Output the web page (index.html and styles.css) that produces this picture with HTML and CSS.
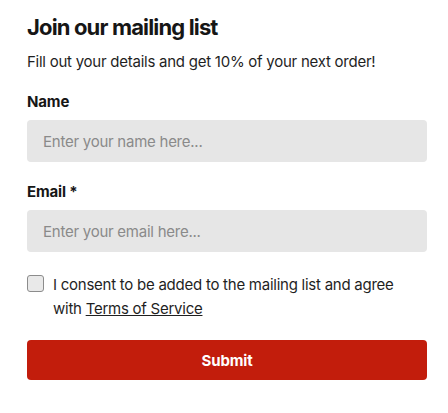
FILE: index.html
```html
<!DOCTYPE html>
<html lang="en">
<head>
<meta charset="utf-8">
<title>Join our mailing list</title>
<link rel="stylesheet" href="styles.css">
</head>
<body>
<form class="signup">
  <h1 class="title">Join our mailing list</h1>
  <p class="subtitle">Fill out your details and get 10% of your next order!</p>
  <div class="field field-name">
    <label class="label" for="name">Name</label>
    <input class="input" id="name" type="text" placeholder="Enter your name here...">
  </div>
  <div class="field field-email">
    <label class="label" for="email">Email *</label>
    <input class="input" id="email" type="email" placeholder="Enter your email here...">
  </div>
  <label class="consent">
    <span class="box"></span>
    <span class="consent-text">I consent to be added to the mailing list and agree with <a class="link" href="#">Terms of Service</a></span>
  </label>
  <button class="submit" type="button">Submit</button>
</form>
</body>
</html>
```
FILE: styles.css
```css
html, body {
  margin: 0;
  padding: 0;
  background: #ffffff;
}
body {
  font-family: Inter, "Noto Sans", sans-serif;
  color: #1a1a1a;
}
.signup {
  width: 400px;
  margin: 0 0 0 27px;
  padding-top: 13px;
  display: flex;
  flex-direction: column;
}
.title {
  margin: 0;
  font-size: 22px;
  line-height: 28px;
  font-weight: 700;
  color: #161616;
  letter-spacing: -0.85px;
}
.subtitle {
  margin: 9px 0 0;
  font-size: 15px;
  line-height: 24px;
  color: #1f1f1f;
  letter-spacing: -0.25px;
}
.field {
  display: flex;
  flex-direction: column;
}
.field-name { margin-top: 16px; }
.field-email { margin-top: 18px; }
.label {
  font-size: 15px;
  line-height: 24px;
  font-weight: 700;
  color: #161616;
  margin-bottom: 6px;
  letter-spacing: -0.15px;
}
.input {
  box-sizing: border-box;
  height: 42px;
  width: 100%;
  border: none;
  border-radius: 4px;
  background: #e6e6e6;
  padding: 0 16px;
  font-family: inherit;
  font-size: 15px;
  letter-spacing: -0.25px;
  color: #1a1a1a;
  outline: none;
}
.input::placeholder {
  color: #8a8a8a;
}
.consent {
  margin-top: 21px;
  display: flex;
  align-items: flex-start;
  gap: 9px;
  font-size: 15px;
  line-height: 24px;
  color: #1f1f1f;
  letter-spacing: -0.25px;
}
.box {
  flex: none;
  box-sizing: border-box;
  width: 17px;
  height: 17px;
  margin-top: 2px;
  border: 1px solid #8c8c8c;
  border-radius: 3px;
  background: #e9e9e9;
}
.consent-text {
  width: 372px;
}
.link {
  color: #1f1f1f;
  text-decoration: underline;
  text-underline-offset: 1px;
}
.submit {
  margin-top: 19px;
  height: 40px;
  width: 100%;
  border: none;
  border-radius: 4px;
  background: #c21d0c;
  color: #ffffff;
  font-family: inherit;
  font-size: 15px;
  font-weight: 700;
  letter-spacing: -0.15px;
}
```
